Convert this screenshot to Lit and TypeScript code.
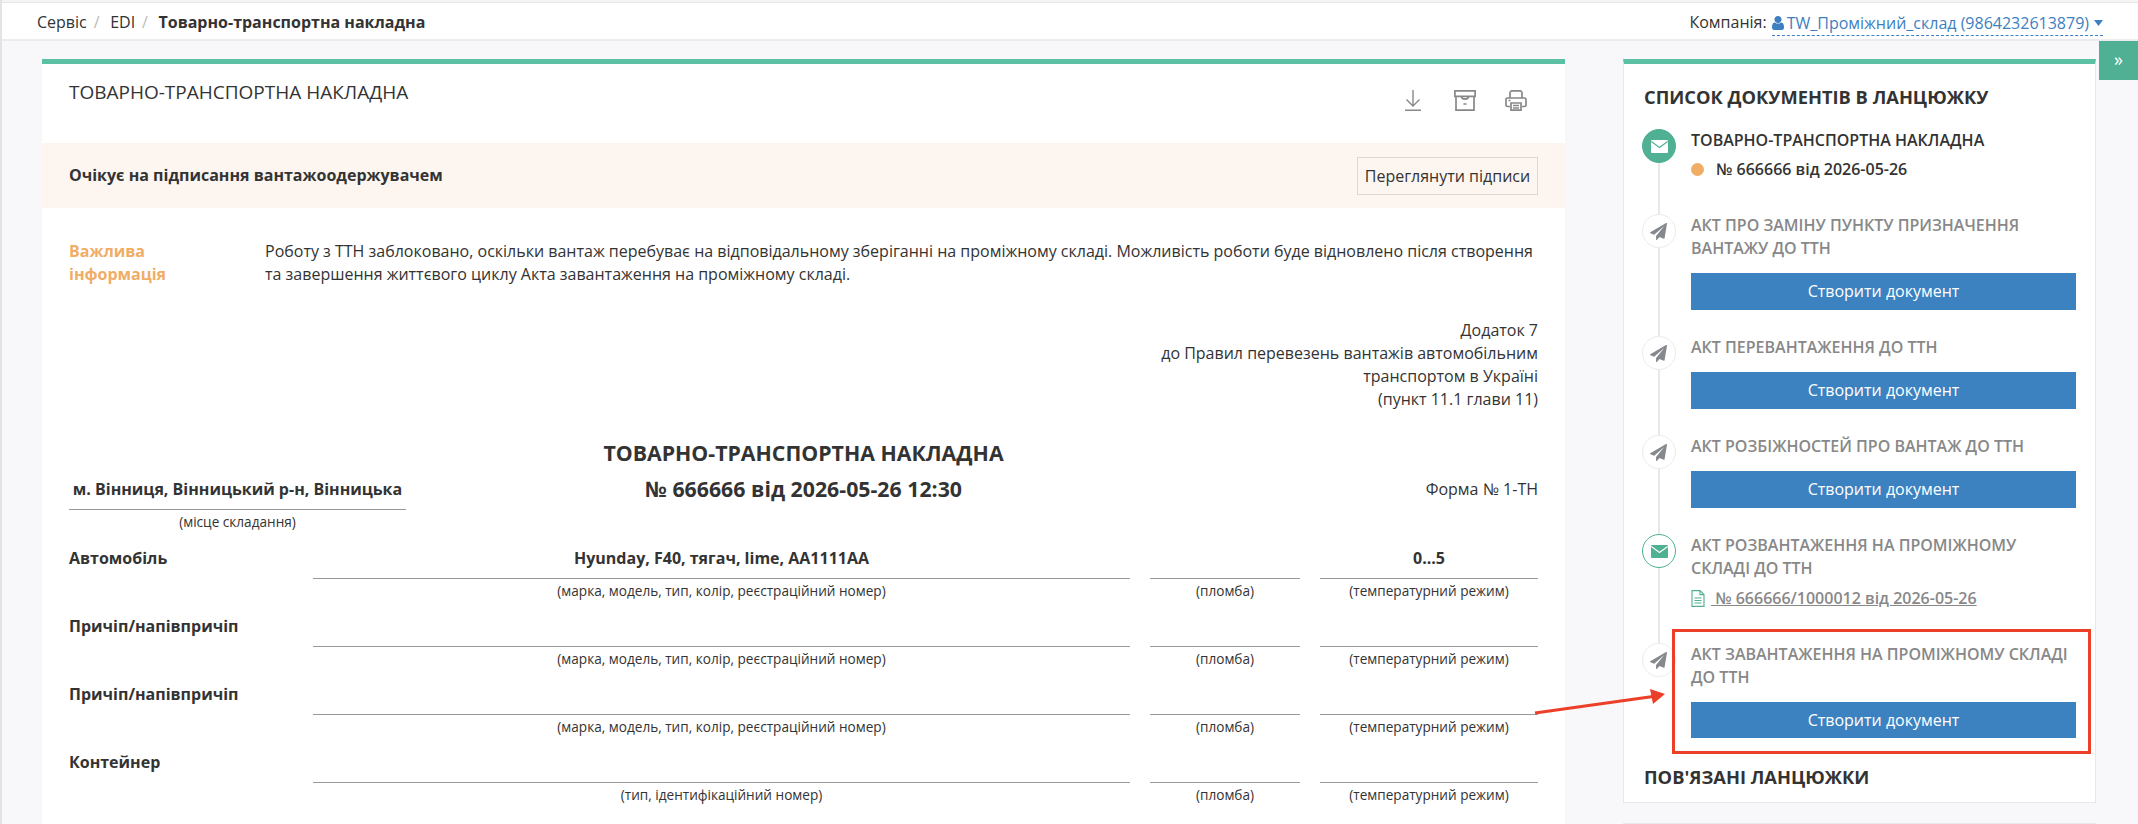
import { LitElement, html, css, svg } from "lit";
import { customElement } from "lit/decorators.js";

const plane = svg`<path d="M1764 11q33 24 27 64l-256 1536q-5 29-32 45-14 8-31 8-11 0-24-5l-453-185-242 295q-18 23-49 23-13 0-22-4-19-7-30.5-23.5t-11.5-36.5v-349l864-1059-1069 925-395-162q-37-14-40-55-2-40 32-59l1664-960q15-9 32-9 20 0 36 11z" fill="currentColor"/>`;

const rows = [
  { label: "Автомобіль", value: "Hyunday, F40, тягач, lime, AA1111AA", temp: "0...5", cap: "(марка, модель, тип, колір, реєстраційний номер)" },
  { label: "Причіп/напівпричіп", value: "", temp: "", cap: "(марка, модель, тип, колір, реєстраційний номер)" },
  { label: "Причіп/напівпричіп", value: "", temp: "", cap: "(марка, модель, тип, колір, реєстраційний номер)" },
  { label: "Контейнер", value: "", temp: "", cap: "(тип, ідентифікаційний номер)" },
];

type Item = { title: unknown; kind: "mail" | "mail-outline" | "plane"; active?: boolean; sub?: string; link?: string; button?: boolean; last?: boolean };
const items: Item[] = [
  { title: "ТОВАРНО-ТРАНСПОРТНА НАКЛАДНА", kind: "mail", active: true, sub: "№ 666666 від 2026-05-26" },
  { title: html`АКТ ПРО ЗАМІНУ ПУНКТУ ПРИЗНАЧЕННЯ<br />ВАНТАЖУ ДО ТТН`, kind: "plane", button: true },
  { title: "АКТ ПЕРЕВАНТАЖЕННЯ ДО ТТН", kind: "plane", button: true },
  { title: "АКТ РОЗБІЖНОСТЕЙ ПРО ВАНТАЖ ДО ТТН", kind: "plane", button: true },
  { title: html`АКТ РОЗВАНТАЖЕННЯ НА ПРОМІЖНОМУ<br />СКЛАДІ ДО ТТН`, kind: "mail-outline", link: "№ 666666/1000012 від 2026-05-26" },
  { title: html`АКТ ЗАВАНТАЖЕННЯ НА ПРОМІЖНОМУ СКЛАДІ<br />ДО ТТН`, kind: "plane", button: true, last: true },
];

@customElement("app-root")
export class AppRoot extends LitElement {
  static styles = css`
    :host {
      display: block;
      position: relative;
      width: 2138px;
      height: 824px;
      overflow: hidden;
      box-sizing: border-box;
      border-left: 2px solid #e3e3e6;
      background: #f8f8fb;
      font-family: "Open Sans", "Noto Sans", sans-serif;
      font-size: 16px;
      line-height: 23px;
      color: #333;
    }
    * { box-sizing: border-box; }
    .strip { height: 3px; background: #f5f5f8; border-bottom: 1px solid #e6e6e9; }
    .topbar {
      height: 38px;
      background: #fff;
      border-bottom: 2px solid #ececef;
      display: flex;
      align-items: flex-start;
      justify-content: space-between;
      padding: 8px 35px 0 35px;
    }
    .crumbs { display: flex; }
    .crumbs .sep { color: #bbb; margin: 0 10.5px 0 7px; }
    .crumbs b { font-weight: 700; }
    .company { display: flex; gap: 5px; }
    .dash {
      display: flex;
      align-items: center;
      height: 25px;
      color: #3d7fc1;
      border-bottom: 1px dashed #3d7fc1;
      gap: 3px;
    }
    .dash svg { width: 12px; height: 14px; display: block; }
    .dash .caret { width: 9px; height: 6px; margin-left: 2px; }
    .content { display: flex; padding: 18px 0 0 40px; gap: 58px; align-items: flex-start; }
    .main { width: 1523px; flex: none; height: 800px; background: #fff; border-top: 5px solid #5cc1a4; }
    .main-head { height: 79px; display: flex; justify-content: space-between; padding: 17px 38px 0 27px; }
    .main-title { font-size: 19px; font-weight: 500; line-height: 23px; }
    .tools { display: flex; gap: 29.5px; padding: 9px 0 0; color: #888; }
    .tools svg { width: 22px; height: 21px; display: block; }
    .banner {
      height: 65px;
      background: #fdf6f0;
      display: flex;
      align-items: center;
      justify-content: space-between;
      padding: 0 27px;
      font-weight: 700;
    }
    .banner > span { padding-bottom: 1px; }
    .sig {
      width: 181px;
      height: 38px;
      border: 1px solid #d9d9d9;
      background: #fdf6f0;
      font: 400 16px "Open Sans", sans-serif;
      color: #333;
      padding: 0;
      text-align: center;
    }
    .doc { padding: 32px 27px 0; }
    .info { display: grid; grid-template-columns: 196px 1fr; }
    .info b { color: #f0ad66; font-weight: 700; }
    .annex { text-align: right; margin-top: 33px; }
    .head { display: grid; grid-template-columns: 337px 1fr 337px; margin-top: 24px; }
    .head-title { text-align: center; font-size: 21.3px; font-weight: 700; line-height: 36px; }
    .place { margin-top: 43px; }
    .place b { display: block; text-align: center; font-weight: 700; white-space: nowrap; padding-bottom: 8px; border-bottom: 1px solid #999; }
    .cap { display: block; font-size: 13.6px; text-align: center; color: #333; height: 23px; }
    .form-no { margin-top: 43px; text-align: right; }
    .row { display: grid; grid-template-columns: 244px 817px 170px 238px; height: 68px; }
    .rows { margin-top: 14px; }
    .row .lab { font-weight: 700; }
    .cell .val { height: 32px; border-bottom: 1px solid #999; text-align: center; font-weight: 700; }
    .c2, .c3 { padding-left: 20px; }
    .aside { width: 473px; flex: none; display: flex; flex-direction: column; gap: 20px; }
    .panel { background: #fff; border: 1px solid #e8e8e8; border-top: 5px solid #5cc1a4; padding: 21px 20px 0; height: 744px; }
    .panel-next { height: 60px; border: 1px solid #e8e8e8; background: #fff; }
    h3 { margin: 0; font-size: 18.3px; font-weight: 700; line-height: 23px; }
    .tl { margin: 21px -1px 0 -2px; }
    .item { display: grid; grid-template-columns: 34px 1fr; column-gap: 15px; }
    .rail { display: flex; flex-direction: column; align-items: center; }
    .rail i { flex: 1; width: 2px; background: #e8e8e8; }
    .circle {
      width: 34px;
      height: 34px;
      border-radius: 50%;
      flex: none;
      display: flex;
      align-items: center;
      justify-content: center;
      background: #fff;
      border: 1px solid #ececec;
      color: #85888c;
    }
    .circle svg { display: block; }
    .circle.plane svg { width: 17px; height: 17px; margin-left: -1px; }
    .circle.mail { background: #4fb093; border-color: #4fb093; color: #fff; --v: #4fb093; }
    .circle.mail-outline { border-color: #4fb093; color: #4fb093; --v: #fff; }
    .circle svg.env { width: 17px; height: 13px; }
    .body { padding-bottom: 26px; }
    .t { font-weight: 600; color: #888; white-space: nowrap; }
    .item.active .t { color: #333; }
    .sub { display: flex; align-items: center; font-weight: 600; margin-top: 6px; margin-bottom: 7px; height: 23px; }
    .dot { width: 13px; height: 13px; border-radius: 50%; background: #f0ad66; margin-right: 12px; }
    .link { display: flex; align-items: center; font-weight: 600; color: #888; margin-top: 7px; margin-bottom: 7px; height: 23px; }
    .link u { margin-left: 6px; text-decoration-thickness: 1px; white-space: pre; }
    .link svg { width: 14px; height: 17px; display: block; }
    .btn {
      display: block;
      width: 100%;
      height: 37px;
      margin-top: 13px;
      border: 0;
      background: #3d82c0;
      color: #fff;
      font: 400 16px/37px "Open Sans", sans-serif;
      padding: 0;
      text-align: center;
    }
    .item:last-child .btn { height: 36px; line-height: 36px; }
    .linked { padding-top: 1px; }
    .toggle {
      position: absolute;
      left: 2097px;
      top: 41px;
      width: 39px;
      height: 39px;
      background: #4fb093;
      color: #fff;
      display: flex;
      align-items: center;
      justify-content: center;
      font-size: 18px;
      padding-bottom: 2px;
    }
    .redbox {
      position: absolute;
      left: 1670px;
      top: 629px;
      width: 419px;
      height: 125px;
      border: 3px solid #ec3f28;
      pointer-events: none;
    }
    .arrow { position: absolute; left: 1523px; top: 680px; width: 150px; height: 40px; overflow: visible; }
  `;

  private circle(kind: Item["kind"]) {
    if (kind === "plane") {
      return html`<div class="circle plane"><svg viewBox="0 0 1792 1792">${plane}</svg></div>`;
    }
    return html`<div class="circle ${kind}">
      <svg class="env" viewBox="0 0 17 13">
        <rect x="0" y="0" width="17" height="13" rx="1" fill="currentColor" />
        <path d="M0.3 1.6 L8.5 7.6 L16.7 1.6" fill="none" stroke="var(--v)" stroke-width="1.2" />
      </svg>
    </div>`;
  }

  render() {
    return html`
      <div class="strip"></div>
      <header class="topbar">
        <div class="crumbs"><span>Сервіс</span><span class="sep">/</span><span>EDI</span><span class="sep">/</span><b>Товарно-транспортна накладна</b></div>
        <div class="company">
          <span>Компанія:</span>
          <span class="dash">
            <svg viewBox="256 128 1280 1536" preserveAspectRatio="none"><path fill="currentColor" d="M1536 1399q0 109-62.5 187t-150.5 78h-854q-88 0-150.5-78t-62.5-187q0-85 8.5-160.5t31.5-152 58.5-131 94-89 134.5-34.5q131 128 313 128t313-128q76 0 134.5 34.5t94 89 58.5 131 31.5 152 8.5 160.5zm-256-887q0 159-112.5 271.5t-271.5 112.5-271.5-112.5-112.5-271.5 112.5-271.5 271.5-112.5 271.5 112.5 112.5 271.5z"/></svg>
            <span>TW_Проміжний_склад (9864232613879)</span>
            <svg class="caret" viewBox="0 0 9 6"><path fill="currentColor" d="M0 0h9L4.5 6z"/></svg>
          </span>
        </div>
      </header>
      <div class="content">
        <section class="main">
          <div class="main-head">
            <div class="main-title">ТОВАРНО-ТРАНСПОРТНА НАКЛАДНА</div>
            <div class="tools">
              <svg viewBox="0 0 22 21" fill="none" stroke="currentColor" stroke-width="1.4"><path d="M11 0v15.500M4.500 9.500l6.500 6.500 6.500-6.500M3 20.300h16"/></svg>
              <svg viewBox="0 0 22 21" fill="none" stroke="currentColor" stroke-width="1.7"><path d="M.9.9h20.200v5.500H.9zM2 6.400v13.700h18V6.400M7.500 6.400c0 3.500 7 3.500 7 0M9.500 14h3"/></svg>
              <svg viewBox="0 0 22 21" fill="none" stroke="currentColor" stroke-width="1.7"><path d="M5 8V3A2 2 0 0 1 7 .9h8a2 2 0 0 1 2 2.100V8M5 16.500H2.500A1.500 1.500 0 0 1 1 15V9.500A1.500 1.500 0 0 1 2.500 8h17A1.500 1.500 0 0 1 21 9.500V15a1.500 1.500 0 0 1-1.500 1.500H17M6 13h10v7.100H6zM8 15.500h6M8 18h6M3.500 10.500h2"/></svg>
            </div>
          </div>
          <div class="banner">
            <span>Очікує на підписання вантажоодержувачем</span>
            <button class="sig">Переглянути підписи</button>
          </div>
          <div class="doc">
            <div class="info">
              <b>Важлива<br />інформація</b>
              <span>Роботу з ТТН заблоковано, оскільки вантаж перебуває на відповідальному зберіганні на проміжному складі. Можливість роботи буде відновлено після створення<br />та завершення життєвого циклу Акта завантаження на проміжному складі.</span>
            </div>
            <div class="annex">Додаток 7<br />до Правил перевезень вантажів автомобільним<br />транспортом в Україні<br />(пункт 11.1 глави 11)</div>
            <div class="head">
              <div class="place"><b>м. Вінниця, Вінницький р-н, Вінницька</b><span class="cap">(місце складання)</span></div>
              <div class="head-title">ТОВАРНО-ТРАНСПОРТНА НАКЛАДНА<br />№ 666666 від 2026-05-26 12:30</div>
              <div class="form-no">Форма № 1-ТН</div>
            </div>
            <div class="rows">
              ${rows.map(
                (r) => html`<div class="row">
                  <div class="lab">${r.label}</div>
                  <div class="cell"><div class="val">${r.value}</div><span class="cap">${r.cap}</span></div>
                  <div class="cell c2"><div class="val"></div><span class="cap">(пломба)</span></div>
                  <div class="cell c3"><div class="val">${r.temp}</div><span class="cap">(температурний режим)</span></div>
                </div>`
              )}
            </div>
          </div>
        </section>
        <aside class="aside">
          <div class="panel">
            <h3>СПИСОК ДОКУМЕНТІВ В ЛАНЦЮЖКУ</h3>
            <div class="tl">
              ${items.map(
                (it) => html`<div class="item ${it.active ? "active" : ""}">
                  <div class="rail">${this.circle(it.kind)}${it.last ? "" : html`<i></i>`}</div>
                  <div class="body">
                    <div class="t">${it.title}</div>
                    ${it.sub ? html`<div class="sub"><span class="dot"></span>${it.sub}</div>` : ""}
                    ${it.link
                      ? html`<div class="link">
                          <svg viewBox="0 0 14 17" fill="none" stroke="#4fb093" stroke-width="1.1"><path d="M1 .6h8l4 4v11.800H1zM9 .6v4h4M3.500 8h7M3.500 10.500h7M3.500 13h7"/></svg>
                          <u> ${it.link}</u>
                        </div>`
                      : ""}
                    ${it.button ? html`<button class="btn">Створити документ</button>` : ""}
                  </div>
                </div>`
              )}
            </div>
            <h3 class="linked">ПОВ'ЯЗАНІ ЛАНЦЮЖКИ</h3>
          </div>
          <div class="panel-next"></div>
        </aside>
      </div>
      <div class="toggle">»</div>
      <div class="redbox"></div>
      <svg class="arrow" viewBox="0 0 150 40">
        <path d="M10 33 L128 16.500" stroke="#ec3f28" stroke-width="3" fill="none" />
        <path d="M125 9 L140 14 L128 24 Z" fill="#ec3f28" />
      </svg>
    `;
  }
}
